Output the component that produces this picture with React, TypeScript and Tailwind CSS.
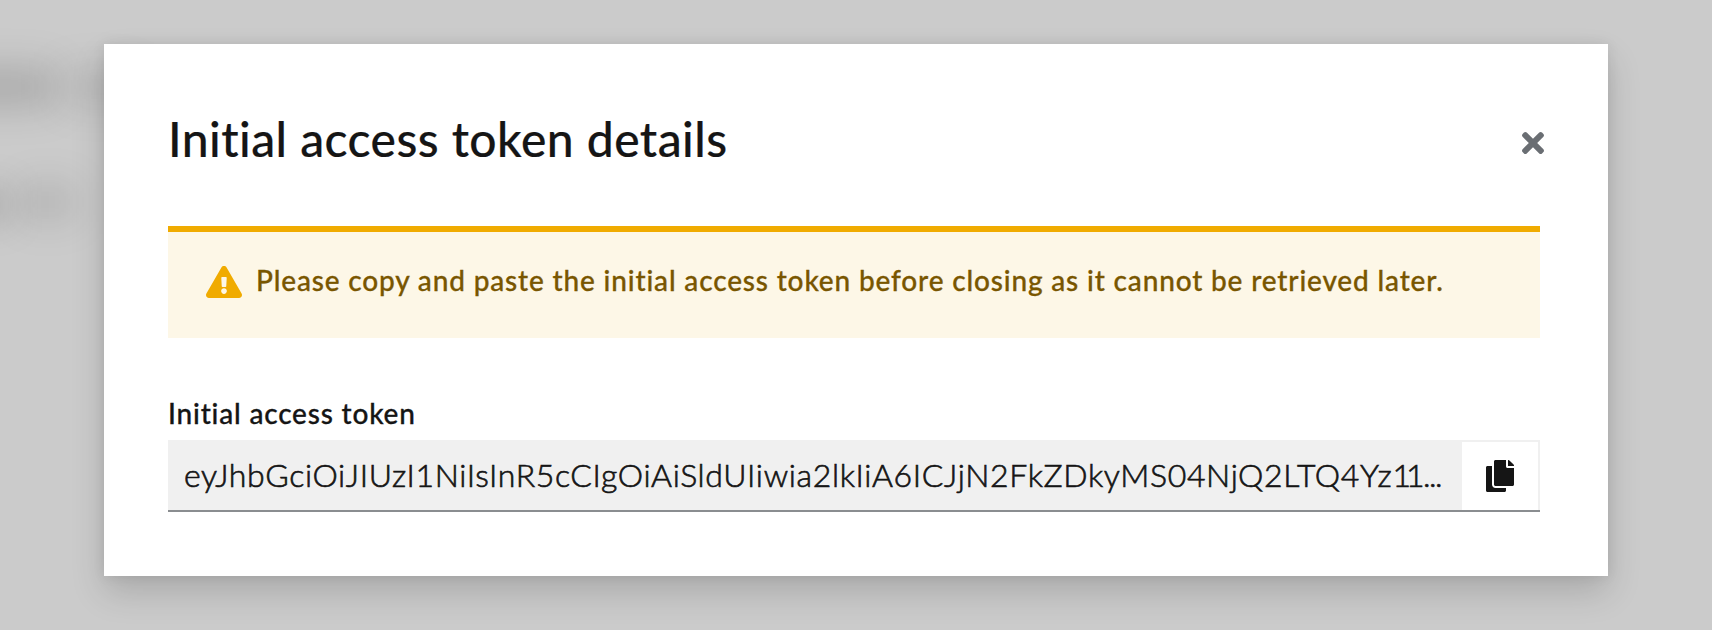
import { FaCopy, FaExclamationTriangle, FaTimes } from "react-icons/fa";

const token =
  "eyJhbGciOiJIUzI1NiIsInR5cCIgOiAiSldUIiwia2lkIiA6ICJjN2FkZDkyMS04NjQ2LTQ4Yz";

export default function App() {
  return (
    <div className="relative h-[630px] w-[1712px] overflow-hidden bg-[#cbcbcb] px-[104px] pt-11 font-[Lato,sans-serif] text-[#151515] [font-variant-ligatures:none]">
      <div className="absolute top-[71px] -left-20 h-8 w-[134px] bg-black/20 blur-[20px]" />
      <div className="absolute top-[71px] left-[60px] h-8 w-[80px] bg-black/10 blur-[20px]" />
      <div className="absolute top-[189px] -left-20 h-8 w-[92px] bg-black/15 blur-[18px]" />
      <div className="absolute top-[182px] left-[20px] h-10 w-[56px] bg-black/10 blur-[18px]" />
      <div
        role="dialog"
        className="relative h-[532px] bg-white pr-[68px] pl-16 pt-[66px] shadow-[0_16px_32px_0_rgba(3,3,3,0.16),0_0_12px_0_rgba(3,3,3,0.08)]"
      >
        <header className="flex h-16 items-start justify-between">
          <h1 className="h-[58px] text-[48px] leading-[58px] font-medium tracking-[0.46px] whitespace-nowrap [-webkit-text-stroke:0.2px]">
            <span>Initial access token details</span>
          </h1>
          <button aria-label="Close" className="-mr-[9px] mt-[17px] flex h-8 w-8 items-center justify-center text-[#6a6e73]">
            <FaTimes size={32} />
          </button>
        </header>
        <section className="mt-[52px] flex h-[112px] items-start border-t-[6px] border-[#f0ab00] bg-[#fdf7e7] pt-[34px] pl-[38px]">
          <FaExclamationTriangle className="h-8 w-9 shrink-0 text-[#f0ab00]" />
          <p className="-mt-[7px] ml-[14px] text-[28px] leading-[42px] font-medium tracking-[0.84px] whitespace-nowrap text-[#795600] [-webkit-text-stroke:0.3px]">
            <span>Please copy and paste the initial access token before closing as it cannot be retrieved later.</span>
          </p>
        </section>
        <label className="mt-[54px] block h-[42px] text-[28px] leading-[42px] font-medium tracking-[0.81px] [-webkit-text-stroke:0.3px]">
          <span>Initial access token</span>
        </label>
        <div className="mt-[6px] flex h-[72px] border-b-2 border-[#8a8d90]">
          <div className="w-[1294px] bg-[#f0f0f0] pl-4 text-[32px] leading-[69px] font-light tracking-[0.66px] whitespace-nowrap [-webkit-text-stroke:0.65px]">
            <span>{token}<span className="tracking-[-5px]">1</span><span className="tracking-[-1.5px]">1...</span></span>
          </div>
          <button aria-label="Copy" className="flex flex-1 items-center justify-center border-t-2 border-r-2 border-[#f0f0f0]">
            <FaCopy className="h-8 w-7" />
          </button>
        </div>
      </div>
    </div>
  );
}
